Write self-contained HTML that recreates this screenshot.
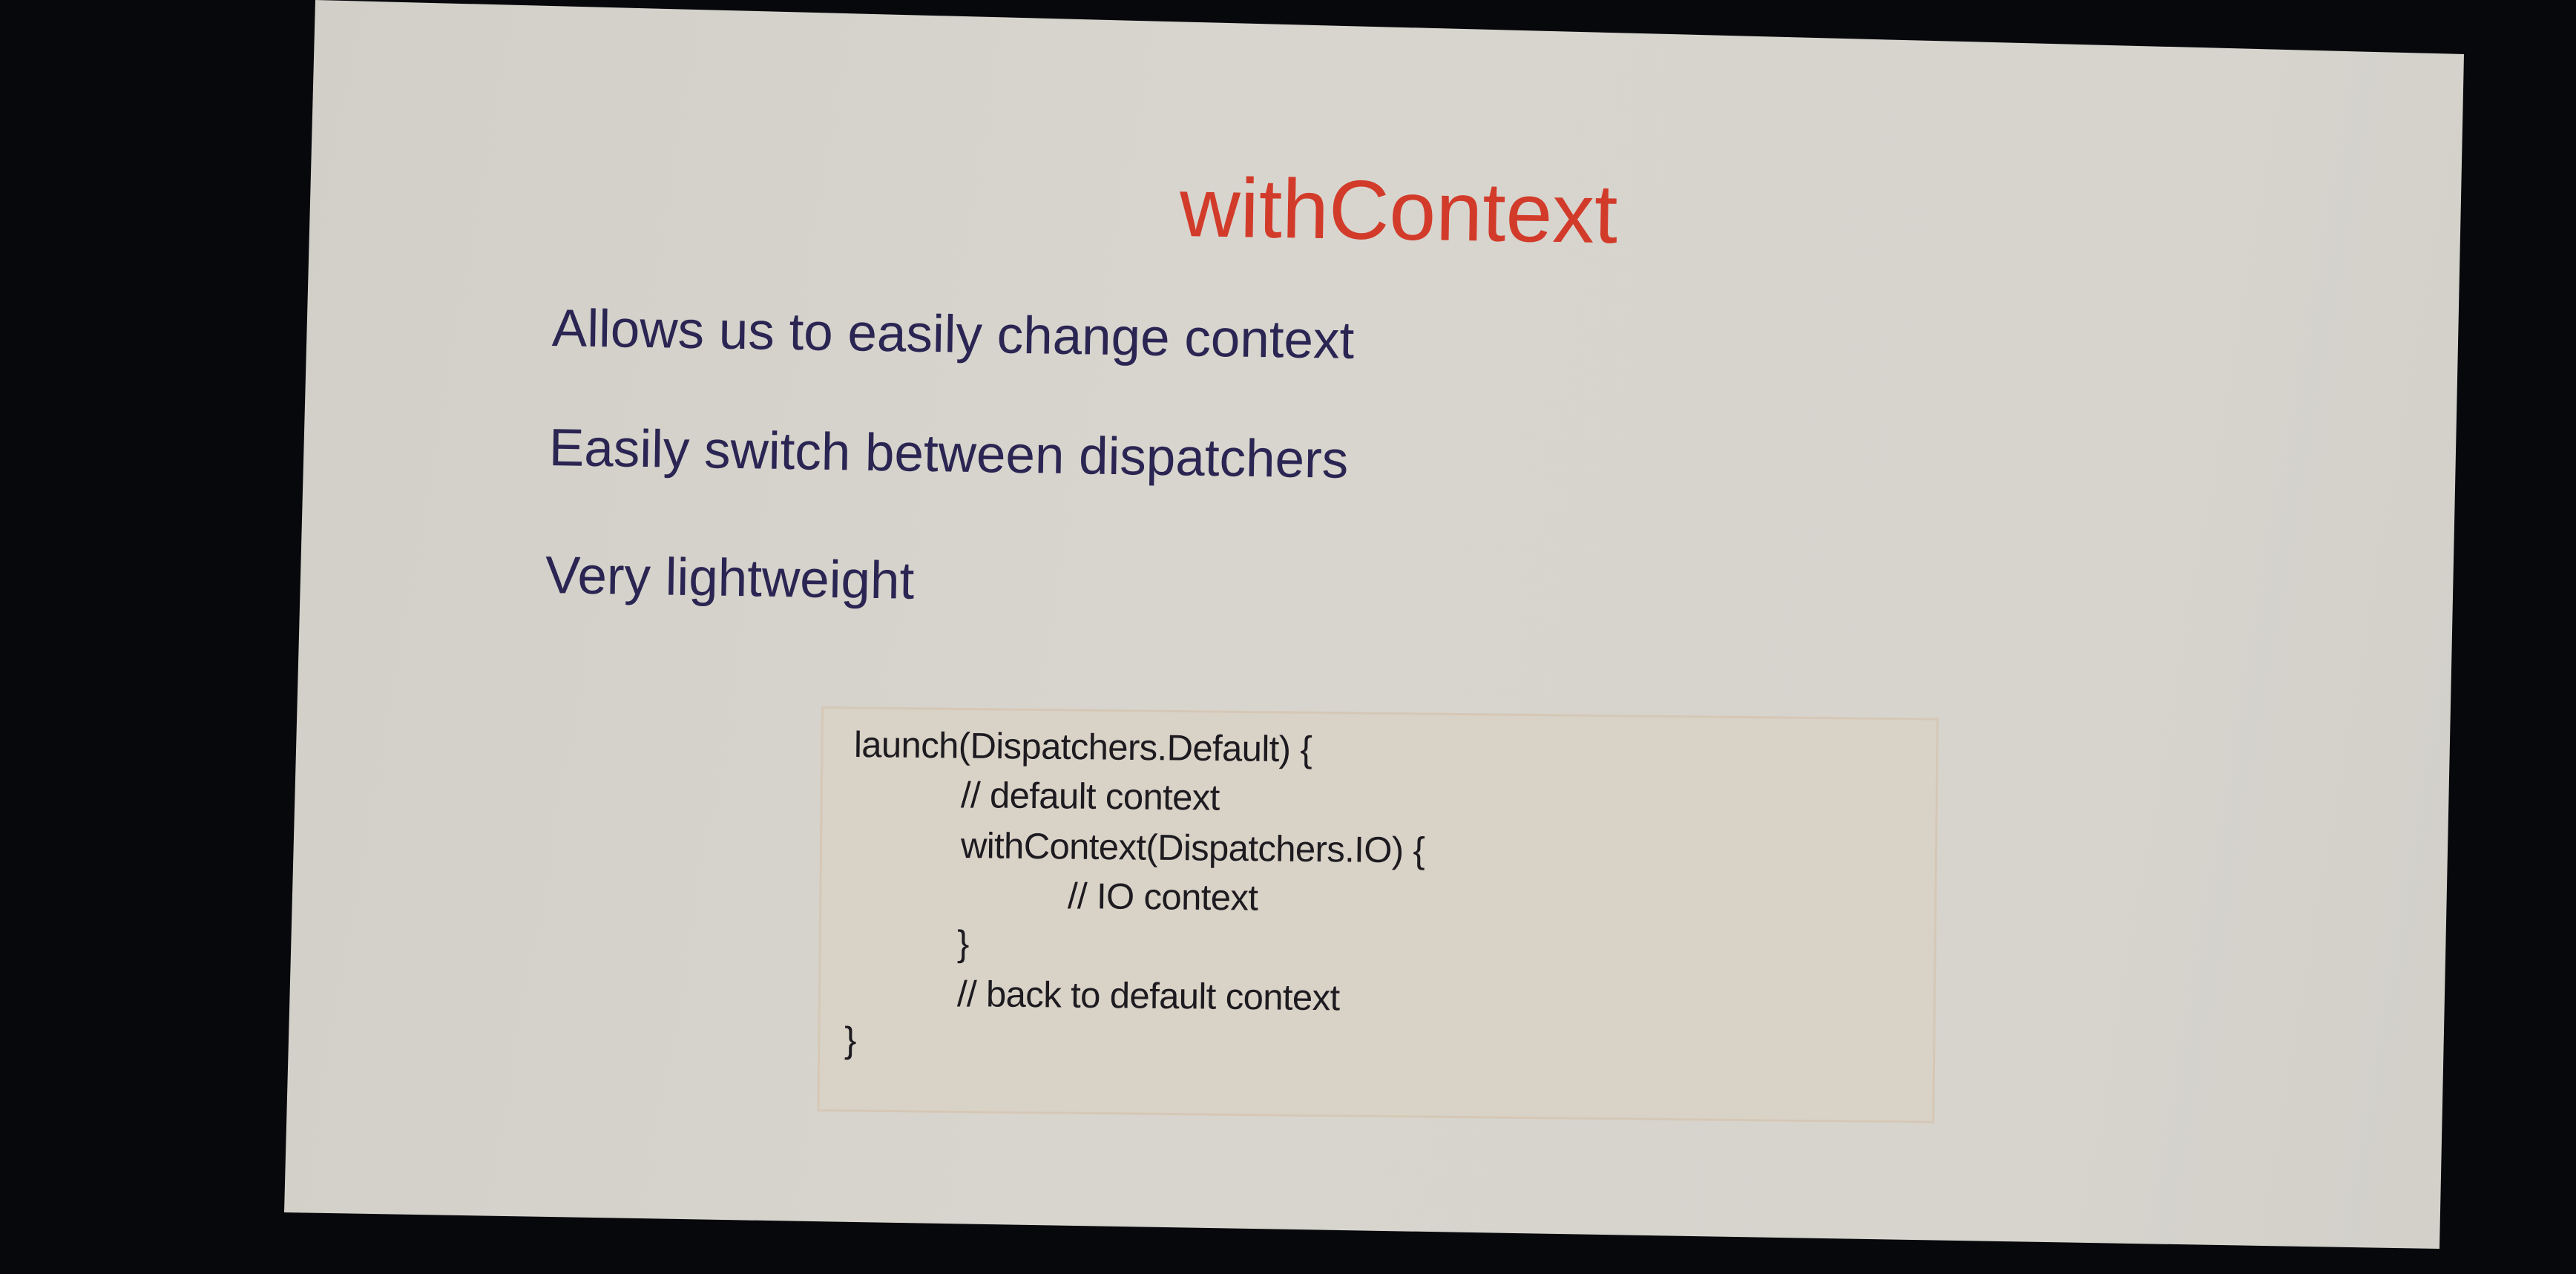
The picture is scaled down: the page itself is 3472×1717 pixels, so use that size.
<!DOCTYPE html>
<html><head><style>
html,body{margin:0;padding:0;background:#07080c;width:3472px;height:1717px;overflow:hidden;font-family:"Liberation Sans",sans-serif}
#slide{position:absolute;left:0;top:0;width:3472px;height:1717px;background:linear-gradient(100deg,#d0cdc6 0%,#d8d5ce 45%,#d6d4cd 80%,#d0cec7 100%);clip-path:polygon(425px 0,3321px 73px,3288px 1683px,383px 1634px)}
.t{position:absolute;white-space:nowrap;transform-origin:0 50%}
.b{color:#2a2552;font-size:71px;transform:rotate(0.9deg)}
.c{color:#1d1b20;font-size:49px;letter-spacing:-0.6px;transform:rotate(0.6deg)}
#box{position:absolute;left:1107px;top:952px;width:1500px;height:540px;background:#d9d2c7;border:3px solid #d6c8b6;transform:rotate(0.6deg);transform-origin:0 0}
</style></head><body>
<div id="slide">
<div class="t" style="left:1590px;top:214px;font-size:113px;color:#d23b2a;transform:rotate(0.9deg)">withContext</div>
<div class="t b" style="left:744px;top:402px">Allows us to easily change context</div>
<div class="t b" style="left:740px;top:563px">Easily switch between dispatchers</div>
<div class="t b" style="left:735px;top:735px">Very lightweight</div>
<div id="box"></div>
<div class="t c" style="left:1151px;top:976px">launch(Dispatchers.Default) {</div>
<div class="t c" style="left:1295px;top:1044px">// default context</div>
<div class="t c" style="left:1295px;top:1112px">withContext(Dispatchers.IO) {</div>
<div class="t c" style="left:1439px;top:1180px">// IO context</div>
<div class="t c" style="left:1290px;top:1244px">}</div>
<div class="t c" style="left:1290px;top:1312px">// back to default context</div>
<div class="t c" style="left:1138px;top:1374px">}</div>
</div>
</body></html>
